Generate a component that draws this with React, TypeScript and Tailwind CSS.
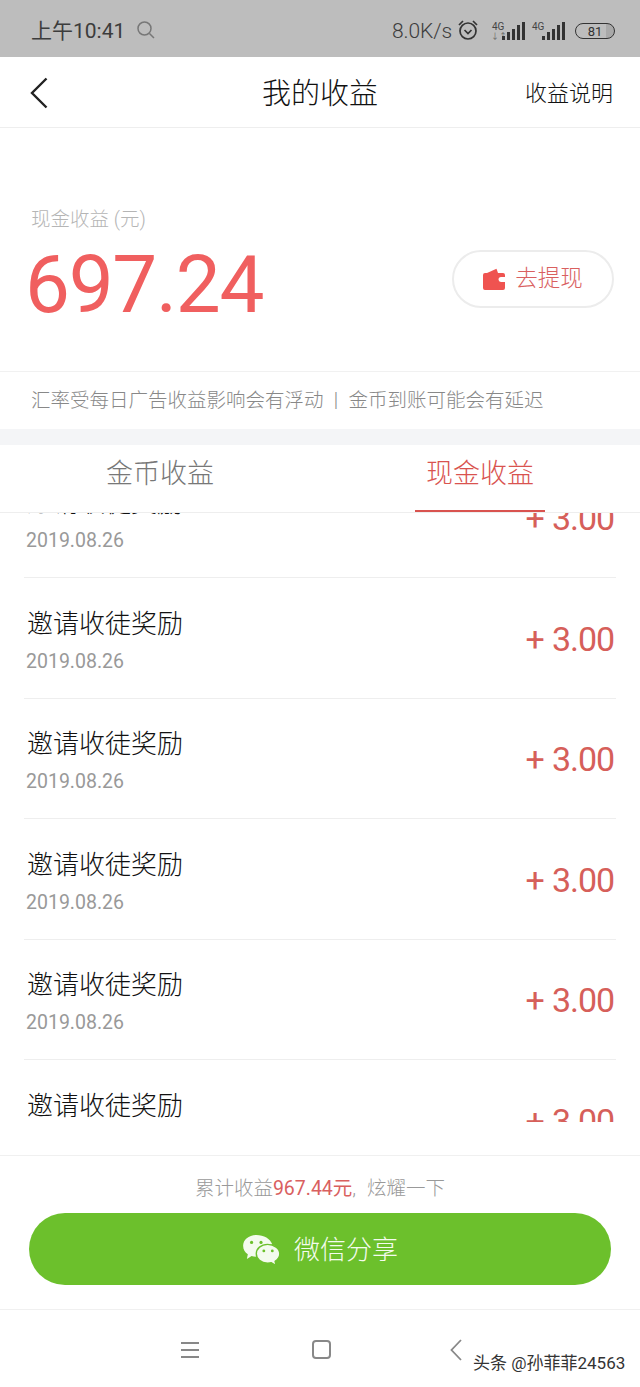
const cjk = "font-['Roboto','Noto_Sans_CJK_SC',sans-serif]";

function Signal({ arrows }: { arrows?: boolean }) {
  return (
    <div className="relative h-[20px] w-[37px]">
      <span className="absolute left-[2px] top-[0px] text-[10px] leading-[11px] text-[#444]">4G</span>
      {arrows && <span className="absolute left-[1px] top-[11px] text-[8px] leading-[9px] text-[#666]">↓↑</span>}
      <svg viewBox="0 0 37 20" className="absolute left-0 top-0 h-[20px] w-[37px]">
        <rect x="12" y="15" width="3" height="4" fill="#333" />
        <rect x="17" y="11" width="3" height="8" fill="#333" />
        <rect x="22" y="8" width="3" height="11" fill="#333" />
        <rect x="27" y="4" width="3" height="15" fill="#333" />
        <rect x="32" y="1" width="3" height="18" fill="#333" />
      </svg>
    </div>
  );
}

function StatusBar() {
  return (
    <div className="flex h-[57px] items-center justify-between bg-[#bdbdbd] pl-[31px] pr-[25px] pt-[5px]">
      <div className="flex items-center gap-[11px]">
        <span className="pt-[1px] text-[21px] text-[#3c3c3c]">上午10:41</span>
        <svg viewBox="0 0 20 20" className="mb-[2px] h-[20px] w-[20px]" fill="none" stroke="#777" strokeWidth="1.5">
          <circle cx="8.5" cy="8.5" r="6.5" />
          <path d="M13.500 13.500 18 18" />
        </svg>
      </div>
      <div className="flex items-center">
        <span className="pt-[1px] text-[21px] font-light tracking-[-0.1px] text-[#3c3c3c]">8.0K/s</span>
        <svg viewBox="0 0 22 22" className="mb-[2px] ml-[5px] mr-[11px] h-[22px] w-[22px]" fill="none" stroke="#333" strokeWidth="1.7">
          <circle cx="11" cy="12" r="8" />
          <path d="M7.500 11 11 14.500l3.500-3.500M2 6l4-4M20 6l-4-4" />
        </svg>
        <Signal arrows />
        <div className="ml-[3px]">
          <Signal />
        </div>
        <div className="ml-[8px] flex h-[16px] w-[40px] items-center justify-center rounded-full border-[1.5px] border-[#333] bg-[linear-gradient(90deg,#bdbdbd_80%,#a9a9a9_80%)] text-[13px] leading-none text-[#333]">
          81
        </div>
      </div>
    </div>
  );
}

function NavBar() {
  return (
    <div className="relative flex h-[71px] items-center justify-between border-b border-[#eeeeee] bg-white pl-[30px] pr-[27px] pt-[2px]">
      <svg viewBox="0 0 18 32" className="h-[32px] w-[18px]" fill="none" stroke="#222" strokeWidth="2.4">
        <path d="M16.500 1.500 2 16l14.500 14.500" />
      </svg>
      <span className="absolute left-0 right-0 mt-[3px] text-center text-[29px] font-light text-[#111]">我的收益</span>
      <span className="relative text-[22px] font-light text-[#111]">收益说明</span>
    </div>
  );
}

function Wallet() {
  return (
    <svg viewBox="0 0 22 22" className="h-[22px] w-[22px]">
      <path fill="#ef5350" d="M4 5 13.500.800 15 5Z" />
      <path
        fill="#ef5350"
        d="M2 5h18a2 2 0 0 1 2 2v2h-4a2.500 2.500 0 0 0 0 5h4v6a2 2 0 0 1-2 2H2a2 2 0 0 1-2-2V7a2 2 0 0 1 2-2Z"
      />
    </svg>
  );
}

function Hero() {
  return (
    <div className="flex h-[244px] flex-col border-b border-[#f1f1f1] bg-white pl-[27px] pr-[26px] pt-[79px]">
      <div className="pl-[4px] text-[19.500px] font-light leading-[26px] text-[#b5b5b5]">现金收益 (元)</div>
      <div className="mt-[1px] flex items-start justify-between">
        <span className="ml-[-2px] mt-[8px] text-[80px] leading-[86px] tracking-[-1.300px] text-[#f05f5f]">697.24</span>
        <div className="mt-[16px] flex h-[58px] w-[162px] items-center justify-center gap-[10px] rounded-full border-2 border-[#ececec]">
          <Wallet />
          <span className="text-[22.500px] font-light text-[#d9605f]">去提现</span>
        </div>
      </div>
    </div>
  );
}

function Tabs() {
  return (
    <div className="relative z-10 grid h-[68px] grid-cols-2 border-b border-[#eeeeee] bg-white text-[27px] font-light">
      <div className="flex items-start justify-center pt-[9px] text-[#777]">金币收益</div>
      <div className="flex justify-center">
        <div className="-mb-px h-[67px] w-[130px] border-b-2 border-[#d9534f] pt-[9px] text-center text-[#d9534f]">现金收益</div>
      </div>
    </div>
  );
}

function Row() {
  return (
    <div className="mx-[24px] flex h-[120.500px] shrink-0 items-center justify-between border-b border-[#eeeeee] pl-[2px] pr-[2px]">
      <div className="pt-[6px]">
        <div className="pl-[1px] text-[26px] font-light leading-[36px] text-[#111]">邀请收徒奖励</div>
        <div className="mt-[6px] text-[19.500px] leading-[28px] text-[#999]">2019.08.26</div>
      </div>
      <div className="mt-[3px] text-[34px] tracking-[-1.100px] text-[#d65f5a] [word-spacing:1px]">+ 3.00</div>
    </div>
  );
}

function WeChat() {
  return (
    <svg viewBox="0 0 40 34" className="h-[32px] w-[38px]">
      <path fill="#f4fbee" d="M15 1C7 1 1 6 1 12.500c0 4 2 7 5 9l-1 5 5-3c2 .5 4 .7 6 .5-1-7 5-13 16-13C30 5 23 1 15 1Z" />
      <path
        fill="#f4fbee"
        stroke="#6cc02c"
        strokeWidth="1.500"
        d="M27 11c-7 0-12 4.500-12 10s5 10 12 10c1.500 0 3-.2 4-.5l5 3-1-4.500c3-2 5-4.800 5-8 0-5.500-6-10-13-10Z"
      />
      <circle cx="10" cy="9" r="1.700" fill="#6cc02c" />
      <circle cx="20" cy="9" r="1.700" fill="#6cc02c" />
      <circle cx="23" cy="18" r="1.500" fill="#6cc02c" />
      <circle cx="32" cy="18" r="1.500" fill="#6cc02c" />
    </svg>
  );
}

function Footer() {
  return (
    <div className="flex h-[155px] flex-col border-b border-t border-[#f0f0f0] bg-white">
      <div className="pt-[19px] text-center text-[19.500px] font-light leading-[28px] text-[#999]">
        累计收益<span className="font-normal text-[#d9605f]">967.44元</span>,<span className="ml-[11px]">炫耀一下</span>
      </div>
      <div className="mx-[29px] mt-[10px] flex h-[72px] items-center justify-center gap-[14px] rounded-full bg-[#6cc02c] pt-[2px] text-[26px] font-light text-[#f4fbee]">
        <WeChat />
        <span>微信分享</span>
      </div>
    </div>
  );
}

function SystemBar() {
  return (
    <div className="relative flex h-[77px] items-center bg-white pt-[2px]">
      <svg viewBox="0 0 20 18" className="ml-[180px] h-[18px] w-[20px]" fill="none" stroke="#888" strokeWidth="2">
        <path d="M1 2h18M1 9h18M1 16h18" />
      </svg>
      <div className="ml-[112px] h-[19px] w-[19px] rounded-[4px] border-2 border-[#888]" />
      <svg viewBox="0 0 12 22" className="ml-[119px] h-[22px] w-[12px]" fill="none" stroke="#888" strokeWidth="1.800">
        <path d="M11 1 1.500 11 11 21" />
      </svg>
      <span className="absolute left-[473px] top-[41px] text-[17px] leading-[24px] text-[#333] [text-shadow:0_0_1px_#fff,0_0_2px_#fff]">
        头条 @孙菲菲24563
      </span>
    </div>
  );
}

export default function App() {
  return (
    <div className={`${cjk} flex h-[1387px] w-[640px] flex-col overflow-hidden bg-white`}>
      <StatusBar />
      <NavBar />
      <Hero />
      <div className="flex h-[57px] items-center bg-white pl-[31px] text-[19.500px] font-light text-[#888]">
        <span>汇率受每日广告收益影响会有浮动</span>
        <span className="w-[25px] text-center text-[19.500px]">|</span>
        <span>金币到账可能会有延迟</span>
      </div>
      <div className="h-[16px] bg-[#f4f5f7]" />
      <Tabs />
      <div className="flex h-[609px] flex-col overflow-hidden bg-white">
        <div className="mt-[-55.500px] flex flex-col">
          <Row />
          <Row />
          <Row />
          <Row />
          <Row />
          <Row />
        </div>
      </div>
      <div className="h-[33px] bg-white" />
      <Footer />
      <SystemBar />
    </div>
  );
}
